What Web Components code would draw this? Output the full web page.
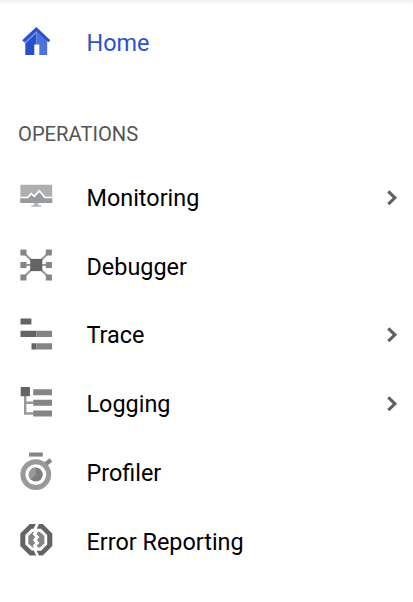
<!DOCTYPE html>
<html lang="en"><head><meta charset="utf-8"><title>Operations</title>
<style>html,body{margin:0;height:100%;background:#fff;overflow:hidden}</style></head>
<body>
<side-nav>
<nav-item icon="home" active>Home</nav-item>
<nav-heading>OPERATIONS</nav-heading>
<nav-item icon="monitoring" expandable>Monitoring</nav-item>
<nav-item icon="debugger">Debugger</nav-item>
<nav-item icon="trace" expandable>Trace</nav-item>
<nav-item icon="logging" expandable>Logging</nav-item>
<nav-item icon="profiler">Profiler</nav-item>
<nav-item icon="error">Error Reporting</nav-item>
</side-nav>
<script>
const ICONS = {
home: `<path fill="#2850ce" d="M5.3 15 16.3 5V19.4H14.3V30H5.3z"/><path fill="#4d72db" d="M16.3 5 27.2 15V30H19.3V19.4H16.3z"/><path d="M4.8 18.1 16.3 7.1" fill="none" stroke="#7592e6" stroke-width="1.6"/><path d="M3.2 16.2 16.3 3.9 29.4 16.2" fill="none" stroke="#2850ce" stroke-width="2.8"/>`,
monitoring: `<path fill="#adafb1" d="M.4 4.8H32.2V23H.4z"/><path fill="#989a9c" d="M.4 18H8L11.5 14.5 14.2 16.8 19.4 11.3 25 18H32.2V23H.4z"/><path d="M.4 17.5H7.8L11.3 13.6 14.3 16.3 19.4 10.7 24.8 17.5H32.2" fill="none" stroke="#fff" stroke-width="1.7"/><path fill="#b3b5b7" d="M14 23H18.5V25.2H21.2V26.7H11.3V25.2H14z"/>`,
debugger: `<path d="M3.5 3.5 16 16 29 3.5M3.5 28.5 16 16 29 28.5M3.5 16H29" fill="none" stroke="#999" stroke-width="2.1"/><path fill="#858585" d="M.4.4H6.5V6.5H.4zM25.8.4H31.9V6.5H25.8zM.4 13H6.5V19H.4zM25.8 13H31.9V19H25.8zM.4 25.4H6.5V31.5H.4zM25.8 25.4H31.9V31.5H25.8z"/><path fill="#646464" d="M10.2 9.9H22.3V22.1H10.2z"/>`,
trace: `<path fill="#646464" d="M.5.4H11.4V6.6H.5zM.5 12.8H16.3V18.9H.5zM11.5 25.2H16.3V31.4H11.5z"/><path fill="#858585" d="M16.3 12.8H32.1V18.9H16.3zM16.3 25.2H32.1V31.4H16.3z"/>`,
logging: `<path d="M5.2 9V26.5H13.5M5.2 15.8H13.5" fill="none" stroke="#999" stroke-width="2.4"/><path fill="#646464" d="M.7 0H9.9V9.2H.7z"/><path fill="#858585" d="M13.2 2.2H32V8.2H13.2zM13.2 12.8H32V18.8H13.2zM13.2 23.6H32V29.5H13.2z"/>`,
profiler: `<path fill="#858585" d="M9.1-2.5H22.8V1.6H9.1z"/><path d="M25.8 9.2 30.9 4.8" stroke="#858585" stroke-width="4.4"/><circle cx="15.8" cy="19.6" r="12.9" fill="none" stroke="#999" stroke-width="5"/><circle cx="15.8" cy="19.6" r="7" fill="#7d7d7d"/><path fill="#999" d="M15.8 19.6V12.6A7 7 0 0 0 10.8 24.6z"/>`,
error: `<path fill="#646464" d="M9.8 0H15.8L13.6 4.7H11.6L5.3 11V20.5L11.6 26.6H13.8L16.2 31.4H9.8L.3 21.9V9.4zM18.9 0H22.8L32.3 9.4V21.9L22.8 31.4H19L16.7 26.7H21L27.2 20.5V11L21 4.8H16.8z"/><path fill="#858585" d="M12.6 8H14L12.6 10.2 15.3 13.1 12.9 16.1 15.3 19.1 12.8 21.6 13.8 23.5H12.6L8.3 19.6V12zM17.8 8H19.9L24.4 12V19.6L19.9 23.5H18.1L16.8 21.6 19.4 19.1 17 16.1 19.4 13.1 16.6 10.2z"/>`
};
class SideNav extends HTMLElement{constructor(){super();this.attachShadow({mode:'open'}).innerHTML=`<style>
:host{display:block;box-sizing:border-box;height:602px;padding-top:6.875px;background:linear-gradient(#eee,#f7f7f7 2px,#fff 5px);font-family:Roboto,sans-serif;color:#000}
nav{display:flex;flex-direction:column}</style><nav><slot></slot></nav>`}}
class NavHeading extends HTMLElement{constructor(){super();this.attachShadow({mode:'open'}).innerHTML=`<style>
:host{display:flex;align-items:center;box-sizing:border-box;height:86.25px;padding:30px 0 0 18px;font-size:20.2px;line-height:24px;color:#555}</style><span><slot></slot></span>`}}
class NavItem extends HTMLElement{constructor(){super();this.attachShadow({mode:'open'})}
connectedCallback(){this.shadowRoot.innerHTML=`<style>
:host{display:flex;align-items:center;box-sizing:border-box;height:68.75px;padding:0 12px 0 20px;font-size:23.4px;line-height:28px}
:host([active]){color:#3050cc}
svg{display:block;flex:none;overflow:visible}
.label{flex:1;margin-left:34.5px;padding-top:3px;white-space:nowrap}
.chevron{margin-top:3px}</style>
<svg width="32" height="32" viewBox="0 0 32 32">${ICONS[this.getAttribute('icon')]}</svg>
<span class="label"><slot></slot></span>
${this.hasAttribute('expandable')?'<svg class="chevron" width="16" height="16" viewBox="0 0 16 16"><path d="M3.3 1.4 9.9 7.8 3.3 14.2" fill="none" stroke="#606060" stroke-width="3.1"/></svg>':''}`}}
customElements.define('side-nav',SideNav);
customElements.define('nav-heading',NavHeading);
customElements.define('nav-item',NavItem);
</script></body></html>
